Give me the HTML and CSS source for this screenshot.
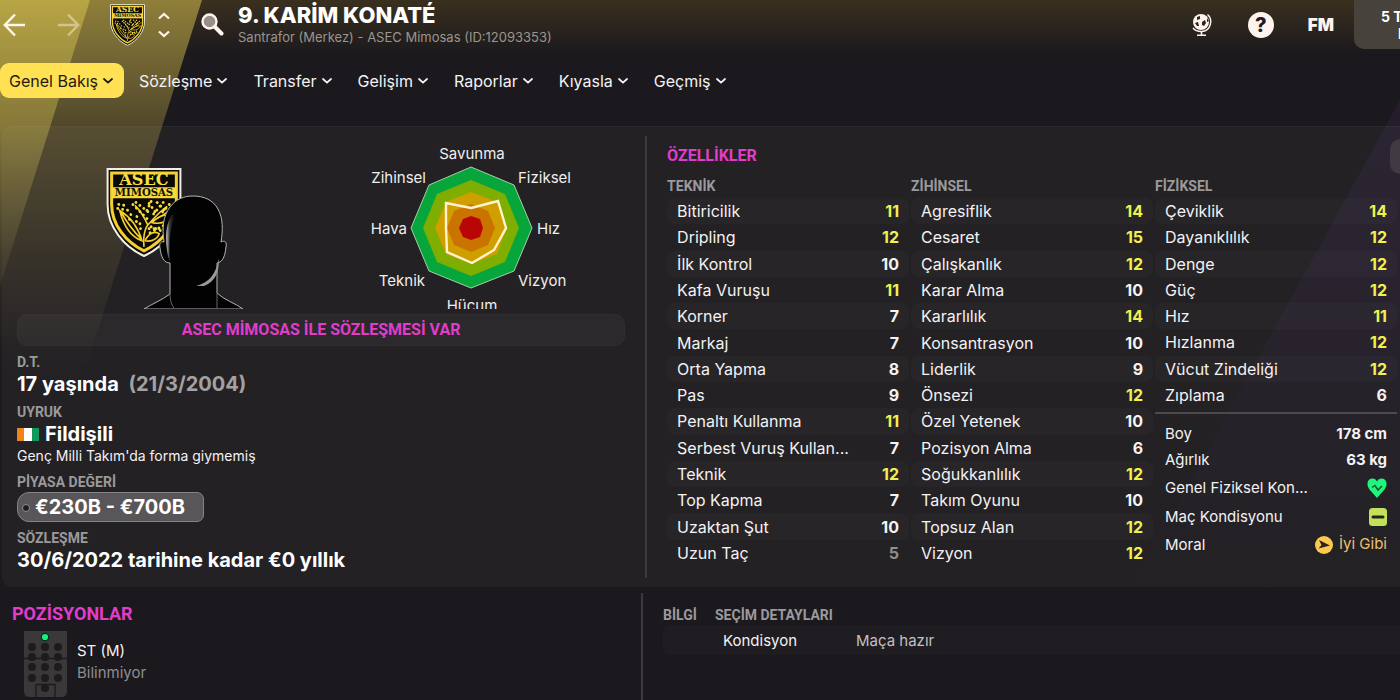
FILE: index.html
```
<!DOCTYPE html>
<html lang="tr">
<head>
    <meta charset="UTF-8">
    <meta name="viewport" content="width=device-width, initial-scale=1.0">
    <title>Karim Konaté</title>
    <link rel="stylesheet" href="styles.css">
</head>
<body>
    <svg class="defs" aria-hidden="true">
        <symbol id="badge" viewBox="0 0 74 88">
            <path d="M1 1H73V36C73 58 57 78 37 87C17 78 1 58 1 36Z" fill="#0a0905" stroke="#f0eee6" stroke-width="2"/>
            <path d="M5 5H69V36C69 56 55 73 37 82C19 73 5 56 5 36Z" fill="#0a0905" stroke="#f3cf30" stroke-width="3"/>
            <path d="M5 19H69V30H5Z" fill="#f6d83a"/>
            <text x="37" y="17" text-anchor="middle" font-family="DejaVu Serif" font-weight="bold" font-size="16" fill="#f6e04a">ASEC</text>
            <text x="37" y="28" text-anchor="middle" font-family="DejaVu Serif" font-weight="bold" font-size="10" fill="#14120a">MIMOSAS</text>
            <g fill="none" stroke="#f3cf30" stroke-width="1.6">
                <path d="M35 72C24 68 17 58 13 42C23 48 31 58 35 72ZM14 43C20 54 26 62 35 71"/>
                <path d="M37 78C36 66 38 58 43 54C52 48 60 46 66 38M43 54C50 46 54 42 60 38M41 57C38 50 33 42 28 37"/>
                <path d="M45 54C52 46 60 46 65 46C61 53 54 56 45 54ZM38 72C42 64 48 62 52 65C50 71 43 73 38 72"/>
            </g>
            <g fill="none" stroke="#f8dc3c" stroke-width="2.8" stroke-linecap="round" stroke-dasharray="0.1 4.8">
                <path d="M12 36L18 37M11 40L22 42M24 46L22 53M30 48L29 57M33 55L34 64M26 36L40 50M29 34L42 44M44 33L39 44M42 35L50 46M50 34L58 42M56 34L46 46M62 36L54 45M42 60L60 60M43 64L58 56M44 58L56 63"/>
            </g>
        </symbol>
        <symbol id="chevron" viewBox="0 0 10 6">
            <path d="M1 1L5 4.6L9 1" fill="none" stroke="currentColor" stroke-width="1.8" stroke-linecap="round"/>
        </symbol>
    </svg>

    <div class="backdrop">
        <div class="band band-outer"></div>
        <div class="band band-inner"></div>
        <div class="band-right"></div>
    </div>

    <header class="topbar">
        <button class="icon-btn" aria-label="Geri">
            <svg width="22" height="24" viewBox="0 0 22 24" fill="none" stroke="#fff6e8" stroke-width="2.4"><path d="M12 1.5L1.8 12L12 22.5M2 12H22"/></svg>
        </button>
        <button class="icon-btn forward" aria-label="İleri">
            <svg width="22" height="24" viewBox="0 0 22 24" fill="none" stroke="#fff6e8" stroke-width="2.4"><path d="M10 1.5L20.2 12L10 22.5M20 12H0"/></svg>
        </button>
        <svg class="club-badge" width="35" height="42"><use href="#badge"/></svg>
        <div class="stepper">
            <button class="icon-btn" aria-label="Önceki">
                <svg width="12" height="8" viewBox="0 0 12 8" fill="none" stroke="#fff6e8" stroke-width="2.2"><path d="M1 6.5L6 2L11 6.5"/></svg>
            </button>
            <button class="icon-btn" aria-label="Sonraki">
                <svg width="12" height="8" viewBox="0 0 12 8" fill="none" stroke="#fff6e8" stroke-width="2.2"><path d="M1 1.5L6 6L11 1.5"/></svg>
            </button>
        </div>
        <button class="icon-btn search" aria-label="Ara">
            <svg width="23" height="23" viewBox="0 0 23 23"><circle cx="8.5" cy="8.5" r="7" fill="#989087" stroke="#fff6f0" stroke-width="2.4"/><path d="M14 14L20.5 20.5" stroke="#fff6f0" stroke-width="4" stroke-linecap="round"/></svg>
        </button>
        <div class="title">
            <h1>9. KARİM KONATÉ</h1>
            <p>Santrafor (Merkez) - ASEC Mimosas (ID:12093353)</p>
        </div>
        <div class="tools">
            <button class="icon-btn" aria-label="Dünya">
                <svg width="20" height="24" viewBox="0 0 20 24"><circle cx="9" cy="9" r="8" fill="#fff3ee"/><path d="M5 4L8 3L8 6L5 7ZM3 10L6 9L7 13L5 13ZM10 9L13 7L14 10L12 13L10 12ZM15 5L17 8L15 9Z" fill="#2a251f"/><path d="M15.5 1.5C21 6 19.5 18 9.5 18.5C6 18.6 3 17.5 1 15" fill="none" stroke="#fff3ee" stroke-width="1.4"/><path d="M9.5 18V22M5 22.3H14" stroke="#fff3ee" stroke-width="1.6"/></svg>
            </button>
            <button class="help" aria-label="Yardım">?</button>
            <button class="fm">FM</button>
            <button class="date"><span>5 T</span><span>P</span></button>
        </div>
    </header>

    <nav class="tabs">
        <button class="tab active">Genel Bakış <svg width="10" height="6"><use href="#chevron"/></svg></button>
        <button class="tab">Sözleşme <svg width="10" height="6"><use href="#chevron"/></svg></button>
        <button class="tab">Transfer <svg width="10" height="6"><use href="#chevron"/></svg></button>
        <button class="tab">Gelişim <svg width="10" height="6"><use href="#chevron"/></svg></button>
        <button class="tab">Raporlar <svg width="10" height="6"><use href="#chevron"/></svg></button>
        <button class="tab">Kıyasla <svg width="10" height="6"><use href="#chevron"/></svg></button>
        <button class="tab">Geçmiş <svg width="10" height="6"><use href="#chevron"/></svg></button>
    </nav>

    <main>
        <div class="card">
            <section class="profile">
                <div class="hero">
                    <svg class="portrait" width="180" height="159" viewBox="0 0 180 159">
                        <defs>
                            <linearGradient id="rim" x1="0" x2="1">
                                <stop offset="0" stop-color="#c8c8c8"/>
                                <stop offset="0.4" stop-color="#333"/>
                                <stop offset="1" stop-color="#000"/>
                            </linearGradient>
                        </defs>
                        <use href="#badge" x="16" y="18" width="76" height="89"/>
                        <path d="M54 159C62 154 72 150 80 144L80 113C74 113 71 107 70 98C69 93 71 91 74 92C72 78 73 66 80 57C86 49 94 46 103 46C114 46 123 50 128 59C133 68 133 80 131 92C135 90 137 92 136 97C135 106 133 112 127 113L127 143C134 150 145 153 153 159Z" fill="#020202" stroke="#b5b5b5" stroke-width="1"/>
                        <path d="M82 65C75 74 75 92 78 106L80 112C79 98 79 80 85 65Z" fill="url(#rim)"/>
                        <path d="M106 136C119 133 126 124 129 108C129 122 126 131 114 136Z" fill="#9a9a9a"/>
                        <path d="M80 144C80 150 81 154 84 158M127 128V158" fill="none" stroke="#666" stroke-width="1"/>
                    </svg>
                    <svg class="radar" width="240" height="174" viewBox="0 0 240 174">
                        <polygon points="121,32 164,50 182,93 164,136 121,153 79,136 61,93 79,50" fill="#06a63c" stroke="#a5cfa8" stroke-width="1"/>
                        <polygon points="121,45 155,59 169,93 155,127 121,141 87,127 73,93 87,59" fill="#7fae00"/>
                        <polygon points="121,57 147,67 157,93 147,119 121,129 96,119 85,93 96,67" fill="#cf9f00"/>
                        <polygon points="121,69 138,76 145,93 138,110 121,117 104,110 97,93 104,76" fill="#ca7300"/>
                        <polygon points="121,81 130,84 133,93 130,102 121,105 113,102 109,93 113,84" fill="#b90505"/>
                        <polygon points="121,73 148,66 156,93 144,115 122,128 97,117 96,93 96,68" fill="none" stroke="#fff4cf" stroke-width="2.4"/>
                        <g class="radar-labels">
                            <text x="122" y="24" text-anchor="middle">Savunma</text>
                            <text x="168" y="48">Fiziksel</text>
                            <text x="187" y="99">Hız</text>
                            <text x="168" y="151">Vizyon</text>
                            <text x="122" y="176" text-anchor="middle">Hücum</text>
                            <text x="75" y="151" text-anchor="end">Teknik</text>
                            <text x="57" y="99" text-anchor="end">Hava</text>
                            <text x="76" y="48" text-anchor="end">Zihinsel</text>
                        </g>
                    </svg>
                </div>
                <p class="banner">ASEC MİMOSAS İLE SÖZLEŞMESİ VAR</p>
                <div class="facts">
                    <div>
                        <h3>D.T.</h3>
                        <p class="value">17 yaşında <span class="birth">(21/3/2004)</span></p>
                    </div>
                    <div>
                        <h3>UYRUK</h3>
                        <p class="value nation">
                            <svg width="22" height="13" viewBox="0 0 22 13"><path d="M0 0H7V13H0Z" fill="#f08418"/><path d="M7 0H15V13H7Z" fill="#fff"/><path d="M15 0H22V13H15Z" fill="#129a5c"/></svg>
                            Fildişili
                        </p>
                        <p class="note">Genç Milli Takım'da forma giymemiş</p>
                    </div>
                    <div>
                        <h3>PİYASA DEĞERİ</h3>
                        <p class="value price">€230B - €700B</p>
                    </div>
                    <div>
                        <h3>SÖZLEŞME</h3>
                        <p class="value">30/6/2022 tarihine kadar €0 yıllık</p>
                    </div>
                </div>
            </section>

            <section class="attributes">
                <div class="attributes-head">
                    <h2>ÖZELLİKLER</h2>
                    <button class="more" aria-label="Seçenekler"></button>
                </div>
                <div class="columns">
                    <div>
                        <h3>TEKNİK</h3>
                        <table class="stats long">
                            <tr><td>Bitiricilik</td><td class="good">11</td></tr>
                            <tr><td>Dripling</td><td class="good">12</td></tr>
                            <tr><td>İlk Kontrol</td><td>10</td></tr>
                            <tr><td>Kafa Vuruşu</td><td class="good">11</td></tr>
                            <tr><td>Korner</td><td>7</td></tr>
                            <tr><td>Markaj</td><td>7</td></tr>
                            <tr><td>Orta Yapma</td><td>8</td></tr>
                            <tr><td>Pas</td><td>9</td></tr>
                            <tr><td>Penaltı Kullanma</td><td class="good">11</td></tr>
                            <tr><td>Serbest Vuruş Kullan...</td><td>7</td></tr>
                            <tr><td>Teknik</td><td class="good">12</td></tr>
                            <tr><td>Top Kapma</td><td>7</td></tr>
                            <tr><td>Uzaktan Şut</td><td>10</td></tr>
                            <tr><td>Uzun Taç</td><td class="low">5</td></tr>
                        </table>
                    </div>
                    <div>
                        <h3>ZİHİNSEL</h3>
                        <table class="stats long">
                            <tr><td>Agresiflik</td><td class="good">14</td></tr>
                            <tr><td>Cesaret</td><td class="good">15</td></tr>
                            <tr><td>Çalışkanlık</td><td class="good">12</td></tr>
                            <tr><td>Karar Alma</td><td>10</td></tr>
                            <tr><td>Kararlılık</td><td class="good">14</td></tr>
                            <tr><td>Konsantrasyon</td><td>10</td></tr>
                            <tr><td>Liderlik</td><td>9</td></tr>
                            <tr><td>Önsezi</td><td class="good">12</td></tr>
                            <tr><td>Özel Yetenek</td><td>10</td></tr>
                            <tr><td>Pozisyon Alma</td><td>6</td></tr>
                            <tr><td>Soğukkanlılık</td><td class="good">12</td></tr>
                            <tr><td>Takım Oyunu</td><td>10</td></tr>
                            <tr><td>Topsuz Alan</td><td class="good">12</td></tr>
                            <tr><td>Vizyon</td><td class="good">12</td></tr>
                        </table>
                    </div>
                    <div>
                        <h3>FİZİKSEL</h3>
                        <table class="stats short">
                            <tr><td>Çeviklik</td><td class="good">14</td></tr>
                            <tr><td>Dayanıklılık</td><td class="good">12</td></tr>
                            <tr><td>Denge</td><td class="good">12</td></tr>
                            <tr><td>Güç</td><td class="good">12</td></tr>
                            <tr><td>Hız</td><td class="good">11</td></tr>
                            <tr><td>Hızlanma</td><td class="good">12</td></tr>
                            <tr><td>Vücut Zindeliği</td><td class="good">12</td></tr>
                            <tr><td>Zıplama</td><td>6</td></tr>
                        </table>
                        <hr>
                        <table class="stats body">
                            <tr><td>Boy</td><td>178 cm</td></tr>
                            <tr><td>Ağırlık</td><td>63 kg</td></tr>
                            <tr><td>Genel Fiziksel Kon...</td><td><svg width="20" height="20" viewBox="0 0 20 20"><path d="M10 20L2.5 11.5C-1 7 0 1 5 0.5C7.5 0.3 9 1.5 10 3.5C11 1.5 12.5 0.3 15 0.5C20 1 21 7 17.5 11.5Z" fill="#1ff57a"/><path d="M5 9.5L8 7.5L11 12L15 8" fill="none" stroke="#14532f" stroke-width="1.5"/></svg></td></tr>
                            <tr><td>Maç Kondisyonu</td><td><svg width="18" height="18" viewBox="0 0 18 18"><rect width="18" height="18" rx="3.5" fill="#c3e05a"/><path d="M4 9H14" stroke="#22251a" stroke-width="3" stroke-linecap="round"/></svg></td></tr>
                            <tr><td>Moral</td><td class="morale"><svg width="18" height="18" viewBox="0 0 18 18"><circle cx="9" cy="9" r="9" fill="#fcc94f"/><path d="M4 4L15 9.5L3.5 12.5L6.5 9Z" fill="#2a2320"/></svg>İyi Gibi</td></tr>
                        </table>
                    </div>
                </div>
            </section>
        </div>

        <div class="lower">
            <section class="positions">
                <h2>POZİSYONLAR</h2>
                <div class="position">
                    <svg width="43" height="66" viewBox="0 0 43 66">
                        <path d="M0 0H43V60Q43 66 37 66H6Q0 66 0 60Z" fill="#3a3839"/>
                        <path d="M0 27.5H43M12 66V53.5H31V66" fill="none" stroke="#1d1b1d" stroke-width="1.3"/>
                        <g fill="#1d1b1d">
                            <circle cx="8" cy="16" r="4"/><circle cx="21" cy="16" r="4"/><circle cx="34" cy="16" r="4"/>
                            <circle cx="8" cy="26" r="4"/><circle cx="21" cy="26" r="4"/><circle cx="34" cy="26" r="4"/>
                            <circle cx="8" cy="36" r="4"/><circle cx="21" cy="36" r="4"/><circle cx="34" cy="36" r="4"/>
                            <circle cx="8" cy="47" r="4"/><circle cx="21" cy="47" r="4"/><circle cx="34" cy="47" r="4"/>
                            <circle cx="21" cy="57" r="4"/>
                        </g>
                        <circle cx="21" cy="6" r="3.7" fill="#16f07a" stroke="#0c2a1a" stroke-width="1.2"/>
                    </svg>
                    <div>
                        <p>ST (M)</p>
                        <p class="muted">Bilinmiyor</p>
                    </div>
                </div>
            </section>
            <section class="selection">
                <table>
                    <thead>
                        <tr><th class="info">BİLGİ</th><th colspan="2">SEÇİM DETAYLARI</th></tr>
                    </thead>
                    <tbody>
                        <tr><td></td><td class="name">Kondisyon</td><td class="state">Maça hazır</td></tr>
                    </tbody>
                </table>
            </section>
        </div>
    </main>
</body>
</html>
```
FILE: styles.css
```
* {
    box-sizing: border-box;
}
body {
    margin: 0;
    min-height: 100vh;
    display: flex;
    flex-direction: column;
    position: relative;
    overflow: hidden;
    font-family: Inter, "Liberation Sans", sans-serif;
    font-size: 15px;
    color: #f4f2f3;
    background: #1b191d linear-gradient(#3a301f, #1b191d) no-repeat 0 0 / 100% 54px;
}
h1, h2, h3, p {
    margin: 0;
}
button {
    border: none;
    background: none;
    padding: 0;
    font: inherit;
    color: inherit;
    cursor: pointer;
}
svg {
    display: block;
    flex: none;
}
.defs {
    position: absolute;
    width: 0;
    height: 0;
}

/* diagonal club colours behind everything */
.backdrop {
    position: absolute;
    inset: 0;
    z-index: -1;
    overflow: hidden;
}
.band {
    position: absolute;
    top: 0;
    left: 0;
    height: 380px;
}
.band-outer {
    width: 202px;
    background: linear-gradient(#8f7f3a, #51482b 126px, #302b23 260px, #1b191d 370px);
    clip-path: polygon(0 0, 100% 0, 82px 100%, 0 100%);
}
.band-inner {
    width: 90px;
    background: linear-gradient(#b8a545, #857839 126px, #40392a 260px, #1b191d 370px);
    clip-path: polygon(0 0, 100% 0, 0 286px);
}
.band-right {
    position: absolute;
    top: 100px;
    right: 0;
    bottom: 0;
    width: 330px;
    background: linear-gradient(#251d2d, #1f1a23 50%, #1b191d 85%);
    clip-path: polygon(100% 0, 100% 100%, 0 100%);
}

/* top bar */
.topbar {
    display: flex;
    align-items: center;
    height: 49px;
    padding-left: 3px;
}
.forward {
    margin-left: 33px;
    opacity: 0.45;
}
.club-badge {
    margin-left: 30px;
}
.stepper {
    display: flex;
    flex-direction: column;
    gap: 10px;
    margin-left: 13px;
}
.search {
    margin-left: 31px;
}
.title {
    margin-left: 14px;
}
.title h1 {
    font-size: 22px;
    line-height: 24px;
    font-weight: 800;
    color: #fff;
}
.title p {
    font-size: 13px;
    line-height: 20px;
    color: #9a958f;
}
.tools {
    display: flex;
    align-items: center;
    margin-left: auto;
}
.help {
    width: 26px;
    height: 26px;
    margin-left: 36px;
    border-radius: 50%;
    background: #fff3f0;
    color: #1f1b1c;
    font-size: 20px;
    font-weight: 800;
}
.fm {
    margin-left: 34px;
    font-size: 17px;
    font-weight: 900;
    color: #fff3f0;
}
.date {
    width: 46px;
    height: 49px;
    margin-left: 20px;
    padding: 0 0 0 27px;
    border-radius: 0 0 0 10px;
    background: #48423c;
    font-size: 14px;
    font-weight: 700;
    color: #fff;
    overflow: hidden;
    white-space: nowrap;
    text-align: left;
}
.date span {
    display: block;
}
.date span + span {
    padding-left: 17px;
}

/* tabs */
.tabs {
    display: flex;
    gap: 4px;
    margin-top: 14px;
}
.tab {
    display: flex;
    align-items: center;
    gap: 5px;
    height: 35px;
    padding: 0 11px;
    border-radius: 9px;
    font-size: 16px;
}
.tab.active {
    padding-left: 9px;
    background: #ffe153;
    color: #1f1b12;
}

/* main card */
main {
    flex: 1;
    display: flex;
    flex-direction: column;
    margin-top: 28px;
}
.card {
    display: grid;
    grid-template-columns: 46% 54%;
    margin-left: 2px;
    border-top: 1px solid #ffffff08;
    border-radius: 10px 0 0 10px;
    background: #ffffff09;
}
h2 {
    font-family: Roboto, sans-serif;
    font-size: 16px;
    line-height: 20px;
    color: #e23ccb;
}
h3, th {
    font-family: Roboto, sans-serif;
    font-size: 14px;
    line-height: 20px;
    font-weight: 700;
    color: #9b999b;
}
.profile {
    padding: 8px 20px 15px 15px;
}
.hero {
    display: flex;
    align-items: flex-end;
    gap: 80px;
    padding-left: 73px;
}
.banner {
    margin-top: 5px;
    border: 1px solid #ffffff05;
    border-radius: 10px;
    background: #ffffff0a;
    font-family: Roboto, sans-serif;
    font-size: 16px;
    line-height: 30px;
    font-weight: 700;
    text-align: center;
    color: #e23ccb;
}
.radar-labels {
    fill: #f0eeee;
    font-size: 15px;
}
.facts {
    display: flex;
    flex-direction: column;
    gap: 6px;
    margin-top: 6px;
}
.value {
    font-size: 20px;
    line-height: 24px;
    font-weight: 700;
    color: #fff;
}
.birth {
    margin-left: 5px;
    color: #a3a1a2;
}
.nation {
    display: flex;
    align-items: center;
    gap: 6px;
}
.note {
    font-size: 14px;
    line-height: 20px;
}
.price {
    position: relative;
    width: max-content;
    padding: 0 18px 0 17px;
    border: 1px solid #858385;
    border-radius: 12px 7px 7px 12px;
    background: #585658;
    line-height: 28px;
}
.price::before {
    content: "";
    position: absolute;
    top: 11px;
    left: 4px;
    width: 6px;
    height: 6px;
    border: 1px solid #918f91;
    border-radius: 50%;
    background: #1d1b1d;
}

/* attributes */
.attributes {
    margin: 9px 0;
    padding-left: 20px;
    border-left: 2px solid #3c3a3d;
}
.attributes-head {
    display: flex;
    align-items: center;
    justify-content: space-between;
    height: 40px;
}
.more {
    width: 10px;
    height: 35px;
    border-radius: 10px 0 0 10px;
    background: #403a43;
}
.columns {
    display: grid;
    grid-template-columns: repeat(3, minmax(0, 1fr));
    gap: 2px;
    padding-right: 3px;
}
.columns h3 {
    margin-bottom: 2px;
}
.stats {
    width: 100%;
    border-spacing: 0;
    font-size: 16px;
}
.long {
    height: 368px;
}
.short {
    height: 210px;
}
hr {
    height: 2px;
    margin: 4px 0 6px;
    border: none;
    background: #4d4a4e;
}
.body {
    height: 138px;
    font-size: 15px;
}
.stats td {
    padding: 0 10px;
    white-space: nowrap;
}
.stats td:last-child {
    font-weight: 700;
    text-align: right;
}
.stats tr:nth-child(odd) td {
    background: #ffffff05;
}
.stats td:first-child {
    border-radius: 8px 0 0 8px;
}
.stats td:last-child {
    border-radius: 0 8px 8px 0;
}
.stats.body tr td {
    background: none;
}
.stats.body td:first-child {
    padding-right: 0;
}
.stats.body td:last-child {
    padding-left: 0;
}
.stats svg {
    display: inline-block;
    vertical-align: middle;
}
.stats .good {
    color: #f0f04f;
}
.stats .low {
    color: #8f8d8f;
}
.stats td.morale:last-child {
    font-weight: 400;
    color: #edc070;
}
.morale svg {
    margin-right: 6px;
}

/* lower strip */
.lower {
    flex: 1;
    display: grid;
    grid-template-columns: 641fr 759fr;
    padding-top: 6px;
}
.positions {
    padding: 11px 12px 3px;
}
.positions h2 {
    font-size: 18px;
}
.position {
    display: flex;
    gap: 10px;
    margin-top: 7px;
    padding-left: 12px;
}
.position p {
    margin-top: 10px;
    line-height: 20px;
}
.position .muted {
    margin-top: 2px;
    color: #8f8d8f;
}
.selection {
    padding: 12px 0 0 20px;
    border-left: 2px solid #3c3a3d;
}
.selection table {
    width: 100%;
    border-spacing: 0;
}
.selection th {
    padding: 0;
    text-align: left;
}
.selection .info {
    width: 52px;
}
.selection td {
    height: 30px;
    padding: 0;
    background: #ffffff05;
}
.selection td:first-child {
    border-radius: 8px 0 0 8px;
}
.selection td.name {
    width: 141px;
    padding-left: 8px;
}
.selection .state {
    color: #c2c0c1;
}
```
